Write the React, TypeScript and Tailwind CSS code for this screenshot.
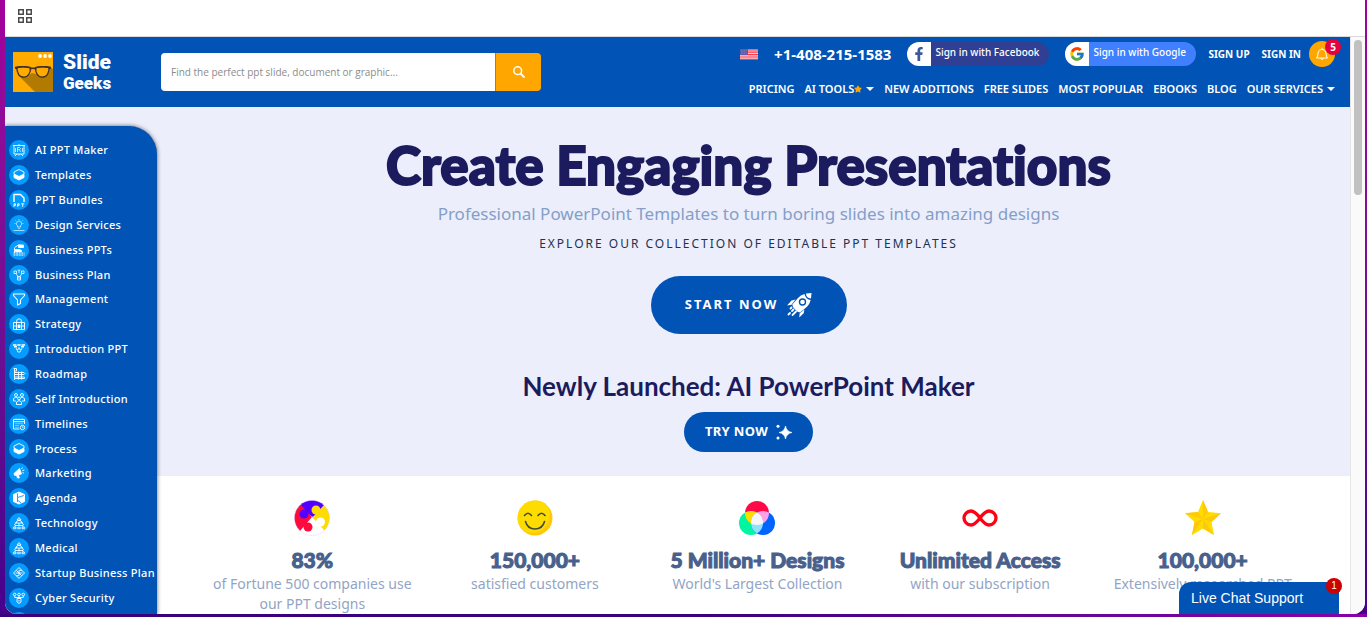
import React, { useState } from 'react';
import { FaFacebookF, FaStar } from 'react-icons/fa';
import { FcGoogle } from 'react-icons/fc';

const categories = [
  { name: 'AI PPT Maker', icon: 'board' },
  { name: 'Templates', icon: 'layers' },
  { name: 'PPT Bundles', icon: 'ppt' },
  { name: 'Design Services', icon: 'bulb' },
  { name: 'Business PPTs', icon: 'desk' },
  { name: 'Business Plan', icon: 'plan' },
  { name: 'Management', icon: 'funnel' },
  { name: 'Strategy', icon: 'case' },
  { name: 'Introduction PPT', icon: 'intro' },
  { name: 'Roadmap', icon: 'road' },
  { name: 'Self Introduction', icon: 'people' },
  { name: 'Timelines', icon: 'calendar' },
  { name: 'Process', icon: 'layers' },
  { name: 'Marketing', icon: 'horn' },
  { name: 'Agenda', icon: 'cube' },
  { name: 'Technology', icon: 'tree' },
  { name: 'Medical', icon: 'tree' },
  { name: 'Startup Business Plan', icon: 'diamond' },
  { name: 'Cyber Security', icon: 'nodes' },
];

const navLinks = [
  { label: 'PRICING' },
  { label: 'AI TOOLS', star: true, menu: true },
  { label: 'NEW ADDITIONS' },
  { label: 'FREE SLIDES' },
  { label: 'MOST POPULAR' },
  { label: 'EBOOKS' },
  { label: 'BLOG' },
  { label: 'OUR SERVICES', menu: true },
];

const iconShapes: Record<string, React.ReactNode> = {
  board: (
    <>
      <path d="M4 5.500h12M5 5.500v8.500h10V5.500M10 4v1.500M8 14l-2 2M12 14l2 2M10 14v1.500" />
      <path d="M8.500 12V7.500h2l1 1-1 1.200h-2M10.500 9.700l1 2.300M6.500 8v4M13.500 8v4" strokeWidth="0.700" />
    </>
  ),
  layers: (
    <>
      <path d="m10 4.500 5 2.500v2L10 11.500 5 9V7z" />
      <path d="M5 9.500v3L10 15l5-2.500v-3L10 12z" fill="#fff" />
    </>
  ),
  ppt: (
    <>
      <path d="M5 12V4.500h6.500L15 8v4" strokeWidth="1.400" />
      <path d="M5 16.800v-3h1.500v1.500H5M8.700 16.800v-3h1.500v1.500H8.700M12.200 13.800h3M13.700 13.800v3" strokeWidth="0.900" />
    </>
  ),
  bulb: (
    <g opacity="0.7">
      <path d="M8.500 12v-1.200a2.600 2.600 0 1 1 3 0V12zM8.800 13.300h2.400M10 4v1M5.500 8.500h1M13.500 8.500h1M6.500 5.500l.8.8M13.500 5.500l-.8.8M4.500 15.500h11" />
    </g>
  ),
  desk: (
    <>
      <path d="M5.500 8v5M5.500 7.500l4-2.500 3 .5" />
      <path d="M9.500 5h5v2.500h-5zM6.500 9.500h4l2 1v1.200h-6z" fill="#fff" />
      <path d="M4.500 13h11M4.500 15h11" strokeWidth="1.200" strokeDasharray="2 0.600" />
    </>
  ),
  plan: (
    <>
      <path d="M5 6h2.500v2.500H5zM12.500 6H15v2.500h-2.500zM8.700 5.200h2.600M10 5.200v3M7 8.500l2 3M13 8.500l-2 3" strokeWidth="0.800" />
      <path d="M8.500 11.500h3v3.500h-3zM8.500 13h3" strokeWidth="0.800" />
    </>
  ),
  funnel: <path d="M4.500 5h11v1.500L11.500 11v3.500l-3 1.500v-5l-4-4.500z" strokeWidth="1.100" />,
  case: (
    <>
      <path d="M4.500 8.500h11v7h-11zM7.800 8.500V6l1-1h2.500l1 1v2.500M7.500 8.500v7M12.500 8.500v7M4.500 12h3M12.500 12h3" />
      <path d="M9 11h2v2.500H9z" fill="#fff" />
    </>
  ),
  intro: (
    <>
      <path d="M4 6h3.500M8.300 6h3.400M12.500 6H16M5 7.800h3M12 7.800h3" strokeWidth="1.500" />
      <path d="m7 9 1 2M13 9l-1 2M10 8v2" />
      <circle cx="10" cy="11.500" r="1.700" />
    </>
  ),
  road: (
    <path d="M5.500 4.500V16M4.500 4.500h3v2.500h-2M5.500 8.500h9.500l1 1-1 1H5.500M5.500 13h9.500l1 .8-1 .7H5.500M9.500 7.500v8M12.500 7.500v8" />
  ),
  people: (
    <>
      <circle cx="7" cy="6" r="1.500" />
      <circle cx="13" cy="6" r="1.500" />
      <circle cx="10" cy="9.500" r="1.400" />
      <path d="M4.500 12V9.500L7 8l1.500 1M15.500 12V9.500L13 8l-1.500 1M7.500 15.500v-2.500L10 11.500l2.500 1.500v2.500zM4.500 12h2.500M13 12h2.500" />
    </>
  ),
  calendar: (
    <>
      <path d="M15.500 10V5.500h-11v9.500h6M4.500 7.700h11M7 4.500V6M10 4.500V6M13 4.500V6" />
      <path d="M6.500 9.700h7M6.500 11.500h4M6.500 13.300h4" strokeDasharray="1 1" />
      <circle cx="13.500" cy="13.500" r="2.200" />
      <path d="M13.500 12.300v1.200h1" strokeWidth="0.700" />
    </>
  ),
  horn: (
    <>
      <path d="M5 10.500 10.500 5.500l2 5.500-3 .8.8 3.200H8.500l-1-2.700H5.500z" fill="#fff" />
      <path d="m12.500 6 1-1.500M13.300 7.700l2-.7M13.500 9.500l1.500.7" />
    </>
  ),
  cube: (
    <>
      <path d="m10 4 5.500 2.500v7L10 16l-5.500-2.500v-7z" fill="#fff" />
      <path d="M8.500 5.500v8.500M8.500 9.500l6.500-2M8.500 12l3.500 3" stroke="#049cff" />
    </>
  ),
  tree: (
    <>
      <path d="M10 4.500 12 7H8zM8.500 7.500h3L13 10H7zM10 10v2.500M6 14v-1.500h8V14M7.500 8.500 5.500 12M12.500 8.500l2 3.500" />
      <path d="M4.500 14.200h2.500v1.500H4.500zM8.700 14.200h2.600v1.500H8.700zM13 14.200h2.500v1.500H13z" strokeWidth="0.800" />
    </>
  ),
  diamond: (
    <path d="m10 4.500 5.500 5.500-5.500 5.500L4.500 10zM7.300 7.300l2.700 2.700V7.300h3M12.700 12.700 10 10v2.700H7.300M10 10h3.500M10 10H6.500" />
  ),
  nodes: (
    <>
      <circle cx="5.700" cy="6.500" r="1.300" />
      <circle cx="10" cy="6.500" r="1.300" />
      <circle cx="14.300" cy="6.500" r="1.300" />
      <path d="M5.700 8v1.500h8.600V8M10 8v2.500M8 10.500h4v3.500l-2 1.500-2-1.500zM10 12v1.500" />
    </>
  ),
};

function CategoryIcon({ icon }: { icon: string }) {
  return (
    <svg viewBox="0 0 20 20" className="h-5 w-5 shrink-0" aria-hidden="true">
      <circle cx="10" cy="10" r="10" fill="#049cff" />
      <g fill="none" stroke="#fff" strokeWidth="0.900" strokeLinejoin="round">
        {iconShapes[icon]}
      </g>
    </svg>
  );
}

function Logo() {
  return (
    <a href="#" className="flex items-center gap-2.5 text-white">
      <svg viewBox="0 0 40 40" className="h-10 w-10" aria-hidden="true">
        <path d="M0 0h40v40H0z" fill="#ffab00" />
        <path d="M5 23 22 40h18V17l-3-2-6 9-12-3-6 4z" fill="#b27a00" />
        <g fill="#ffab00" stroke="#40302e" strokeWidth="1.300">
          <path d="M4 15.500q6-1.500 13 0 1 3-1 6.500-2 3.500-6 3-4-.5-5-4-1.500-3.500-1-5.500z" />
          <path d="M36 15.500q-6-1.500-13 0-1 3 1 6.500 2 3.500 6 3 4-.5 5-4 1.500-3.500 1-5.500z" />
        </g>
        <path d="M2 14.700q7-1.700 15 .3 3 1 6 0 8-2 15-.3v2l-2 .3-1-1.200q-5-1-11.500.3l-1 1.700q-2.500-1.500-5 0l-1-1.700Q10 14.800 5 15.800L4 17l-2-.3z" fill="#40302e" />
        <g fill="#fff">
          <circle cx="27" cy="4" r="1.900" />
          <circle cx="32" cy="4" r="1.900" />
          <circle cx="37" cy="4" r="1.900" />
        </g>
      </svg>
      <span className="flex w-12 flex-col font-['Roboto',sans-serif] font-black">
        <span className="text-[21px] leading-[22px]">Slide</span>
        <span className="text-[17px] leading-5">Geeks</span>
      </span>
    </a>
  );
}

function Flag() {
  return (
    <svg viewBox="0 0 18 11" className="h-[11px] w-[18px]" role="img" aria-label="United States">
      <path d="M0 0h18v11H0z" fill="#ffd0d4" />
      <path d="M0 .8h18M0 3.200h18M0 5.600h18M0 8h18M0 10.400h18" stroke="#ff3b4e" strokeWidth="1.200" />
      <path d="M0 0h8v6H0z" fill="#5a5aa8" />
      <path d="M1 1.500h6M1 3h6M1 4.500h6" stroke="#9c9cd0" strokeWidth="0.500" strokeDasharray="0.800 0.800" />
    </svg>
  );
}

function Caret() {
  return (
    <svg viewBox="0 0 8 4" className="h-1 w-2" aria-hidden="true">
      <path d="M0 0h8L4 4z" fill="#fff" />
    </svg>
  );
}

function Rocket() {
  return (
    <svg viewBox="0 0 26 26" className="h-[26px] w-[26px]" aria-hidden="true">
      <path d="M20 1.500 25.500 1 25 6.500q-2.500-.2-3.800-1.500T20 1.500z" fill="#fff" />
      <path d="M18.500 2q.5 2.700 2.200 4.200 1.500 1.500 4 1.800-1 4-3.700 6.700L14 20.500l-3-1-4-4.500-.7-2.500L12 6q2.500-3 6.500-4z" fill="#fff" />
      <circle cx="16.500" cy="10" r="3" fill="#fff" stroke="#0154b5" strokeWidth="1.400" />
      <path d="M9.500 7.500 5.500 8.500 1 13.500l4.500-.8zM18.500 17.500l-.8 3.700-4.500 4.300.5-4.300z" fill="#fff" />
      <path d="m7.500 17.500-1.500 1.500M4 21l-1.500 1.500M10 19.500 6.500 23M5.500 15.500l-1 1" stroke="#fff" strokeWidth="1.800" strokeLinecap="round" />
    </svg>
  );
}

function Sparkles() {
  return (
    <svg viewBox="0 0 16 16" className="h-4 w-4" aria-hidden="true">
      <path d="M9.500 2q1 5.500 6.500 6.500-5.500 1-6.500 6.500-1-5.500-6.500-6.500 5.500-1 6.500-6.500z" fill="#fff" stroke="#fff" strokeWidth="0.600" />
      <circle cx="2" cy="2.200" r="1.500" fill="#fff" />
      <circle cx="2" cy="14" r="1.500" fill="#fff" />
    </svg>
  );
}

function PuzzleIcon() {
  return (
    <svg viewBox="0 0 36 36" className="h-9 w-9" aria-hidden="true">
      <clipPath id="puzzle">
        <circle cx="18" cy="18" r="17.500" />
      </clipPath>
      <g clipPath="url(#puzzle)">
        <path d="M0 0h36v36H0z" fill="#fff" />
        <path d="M0 0h30v8L19 17 5 8z" fill="#5200ff" />
        <path d="M0 5h7l12 13-12 13H0z" fill="#ff0a3c" />
        <path d="m30 5 6 2v25h-6L18 18z" fill="#ffdc00" />
        <path d="M18 17 31 31l-6 5H10l-4-5z" fill="#fff" />
        <circle cx="10" cy="14" r="4.500" fill="#5200ff" />
        <circle cx="22" cy="10" r="4.500" fill="#ffdc00" />
        <circle cx="26.500" cy="22" r="4.500" fill="#fff" />
        <circle cx="14" cy="27" r="4.500" fill="#ff0a3c" />
      </g>
      <circle cx="18" cy="18" r="17.500" fill="none" stroke="#c9b3ff" strokeWidth="0.500" strokeDasharray="1.500 1" />
    </svg>
  );
}

function SmileIcon() {
  return (
    <svg viewBox="0 0 36 36" className="h-9 w-9" aria-hidden="true">
      <circle cx="18" cy="18" r="17.500" fill="#ffc80a" />
      <path d="M18 .5a17.500 17.500 0 0 1 13.500 6.500Q36 22 25 30 15 36 5 29.500A17.500 17.500 0 0 1 18 .5z" fill="#ffdc00" />
      <g fill="none" stroke="#414b3c" strokeWidth="1.600" strokeLinecap="round">
        <path d="M7.500 15.500q3.500-4.500 7 0M21 15.500q3.500-4.500 7 0M8.500 21.500q2 7.500 9.500 7.500t9.500-7.500" />
      </g>
    </svg>
  );
}

function ColorsIcon() {
  return (
    <svg viewBox="0 0 36 36" className="h-9 w-9" aria-hidden="true">
      <clipPath id="top">
        <circle cx="18" cy="13" r="12" />
      </clipPath>
      <clipPath id="left">
        <circle cx="12" cy="23" r="12" />
      </clipPath>
      <circle cx="18" cy="13" r="12" fill="#ff0a46" />
      <circle cx="12" cy="23" r="12" fill="#00f5a0" />
      <circle cx="24" cy="23" r="12" fill="#0064ff" />
      <g clipPath="url(#top)">
        <circle cx="12" cy="23" r="12" fill="#ffdc00" />
        <circle cx="24" cy="23" r="12" fill="#ffa0e6" />
      </g>
      <g clipPath="url(#left)">
        <circle cx="24" cy="23" r="12" fill="#8ce1ff" />
        <g clipPath="url(#top)">
          <circle cx="24" cy="23" r="12" fill="#f5f5fa" />
        </g>
      </g>
    </svg>
  );
}

function InfinityIcon() {
  return (
    <svg viewBox="0 0 36 36" className="h-9 w-9" aria-hidden="true">
      <path
        d="M18 18c-3-4-5.500-7-9-7a7 7 0 0 0 0 14c3.500 0 6-3 9-7s5.500-7 9-7a7 7 0 0 1 0 14c-3.500 0-6-3-9-7z"
        fill="none"
        stroke="#ff0014"
        strokeWidth="3.300"
      />
    </svg>
  );
}

function StarIcon() {
  return (
    <svg viewBox="0 0 36 36" className="h-9 w-9" aria-hidden="true">
      <path d="m18 0 5 12 13 1.200L26.500 22 29 35l-11-6.500L7 35l2.500-13L0 13.200 13 12z" fill="#ffdc00" />
      <path
        d="M18 0v19l5-7zM36 13.200 18 19l8.500 3zM29 35 18 19v9.500zM7 35 18 19 9.500 22zM0 13.200 18 19l-5-7z"
        fill="#ffc80a"
      />
    </svg>
  );
}

const stats = [
  { icon: <PuzzleIcon />, value: '83%', label: 'of Fortune 500 companies use our PPT designs' },
  { icon: <SmileIcon />, value: '150,000+', label: 'satisfied customers' },
  { icon: <ColorsIcon />, value: '5 Million+ Designs', label: "World's Largest Collection" },
  { icon: <InfinityIcon />, value: 'Unlimited Access', label: 'with our subscription' },
  { icon: <StarIcon />, value: '100,000+', label: 'Extensively researched PPT' },
];

function Header() {
  const [query, setQuery] = useState('');

  return (
    <header className="flex h-[70px] shrink-0 items-center bg-[#0154b5] pl-2 text-white">
      <Logo />
      <form className="ml-[50px] flex h-[38px] w-[380px]" onSubmit={(e) => e.preventDefault()}>
        <input
          type="text"
          aria-label="Search"
          value={query}
          onChange={(e) => setQuery(e.target.value)}
          placeholder="Find the perfect ppt slide, document or graphic..."
          className="min-w-0 flex-1 rounded-l bg-white px-2.5 font-['Open_Sans',sans-serif] text-[10px] text-gray-700 placeholder:text-[#8c8c8c]"
        />
        <button
          type="submit"
          aria-label="Search"
          className="flex w-[46px] items-center justify-center rounded-r border-l border-[#a08040] bg-[#ffa600]"
        >
          <svg viewBox="0 0 12 12" className="h-3 w-3" fill="none" stroke="#fff" strokeWidth="1.500">
            <circle cx="4.700" cy="4.700" r="3.900" />
            <path d="m7.500 7.500 4 4" strokeWidth="1.900" />
          </svg>
        </button>
      </form>

      <div className="ml-auto flex flex-col items-end gap-3 pr-[15px] pb-1">
        <div className="flex h-[26px] items-center">
          <Flag />
          <a href="tel:+14082151583" className="ml-4 text-[15px] font-bold">
            +1-408-215-1583
          </a>
          <button type="button" className="ml-4 flex h-6 w-[142px] overflow-hidden rounded-full bg-[#2f3f93] text-[10px] font-medium">
            <span className="flex h-6 w-6 items-center justify-center bg-white text-[#3b5998]">
              <FaFacebookF className="h-3.5 w-3.5" />
            </span>
            <span className="pl-1 leading-[21px]">Sign in with Facebook</span>
          </button>
          <button type="button" className="ml-4 flex h-6 w-[131px] overflow-hidden rounded-full bg-[#4080ff] text-[10px] font-medium">
            <span className="flex h-6 w-6 items-center justify-center bg-white">
              <FcGoogle className="h-4 w-4" />
            </span>
            <span className="pl-1 leading-[21px]">Sign in with Google</span>
          </button>
          <a href="#" className="ml-3 text-[10px] font-bold">SIGN UP</a>
          <a href="#" className="ml-3 text-[10px] font-bold">SIGN IN</a>
          <button type="button" aria-label="Notifications" className="relative ml-2 flex h-[26px] w-[26px] items-center justify-center rounded-full bg-[#ffa600]">
            <svg viewBox="0 0 14 14" className="h-3.5 w-3.5" fill="none" stroke="#fff" strokeWidth="1">
              <path d="M1.500 11q1.500-1.500 1.500-5Q3.500 2.500 7 2.200 10.500 2.500 11 6q0 3.500 1.500 5zM7 .8v1.400M5.500 11.500q1.500 2 3 0" />
            </svg>
            <span className="absolute -top-0.5 -right-1.5 h-4 w-4 rounded-full bg-[#e6003c] text-[10px] leading-4 font-bold">5</span>
          </button>
        </div>
        <nav className="flex items-center gap-2.5 text-[11px] leading-5 font-semibold">
          {navLinks.map((link) => (
            <a key={link.label} href="#" className="flex items-center whitespace-nowrap">
              {link.label}
              {link.star && <FaStar className="h-2 w-2 text-[#ffa600]" />}
              {link.menu && (
                <span className="ml-1">
                  <Caret />
                </span>
              )}
            </a>
          ))}
        </nav>
      </div>
    </header>
  );
}

function Sidebar() {
  return (
    <aside className="relative mt-[19px] flex w-[152px] shrink-0 flex-col overflow-hidden rounded-tr-[28px] bg-[#0154b5] pt-3 shadow-[0_0_4px_rgba(0,0,0,0.6)]">
      <ul className="-mb-[21px] flex min-h-0 flex-1 flex-col">
        {categories.map((category) => (
          <li key={category.name} className="flex min-h-0 flex-1 items-center">
            <a href="#" className="flex items-center gap-1.5 pl-1 text-[11px] leading-5 font-medium tracking-wide whitespace-nowrap text-white">
              <CategoryIcon icon={category.icon} />
              {category.name}
            </a>
          </li>
        ))}
        <li className="flex min-h-0 flex-1 items-center pl-1">
          <CategoryIcon icon="layers" />
        </li>
      </ul>
    </aside>
  );
}

export default function App() {
  return (
    <div className="flex h-screen flex-col overflow-hidden bg-linear-to-b from-[#a3009b] to-[#45008c] font-['Noto_Sans',sans-serif]">
      <div className="mr-0.5 ml-[5px] flex min-h-0 flex-1 flex-col overflow-hidden rounded-b-xl bg-white">
        <div className="flex h-[37px] shrink-0 items-center border-b border-[#d9d9d9] pb-1 pl-3">
          <button type="button" aria-label="Apps">
            <svg viewBox="0 0 16 16" className="h-4 w-4" fill="none" stroke="#4a4a4d" strokeWidth="1.500">
              <path d="M1.750 1.750h4.500v4.500h-4.500zM9.750 1.750h4.500v4.500h-4.500zM1.750 9.750h4.500v4.500h-4.500zM9.750 9.750h4.500v4.500h-4.500z" />
            </svg>
          </button>
        </div>

        <div className="flex min-h-0 flex-1">
          <div className="relative flex min-w-0 flex-1 flex-col">
            <Header />
            <div className="flex min-h-0 flex-1 bg-[#eceefc]">
              <Sidebar />
              <main className="flex min-w-0 flex-1 flex-col">
                <section className="flex flex-col items-center pt-7 pr-2.5 pb-6 text-center">
                  <h1 className="font-['Lato_Black','Lato',sans-serif] text-[53px] leading-[60px] font-black text-[#1b1b5e] [-webkit-text-stroke:2px_#1b1b5e] [font-variant-ligatures:none]">
                    Create Engaging Presentations
                  </h1>
                  <p className="mt-[5px] text-[17px] leading-7 text-[#849fc8]">
                    Professional PowerPoint Templates to turn boring slides into amazing designs
                  </p>
                  <p className="mt-1.5 text-xs leading-5 tracking-[2px] text-[#22314d]">
                    EXPLORE OUR COLLECTION OF EDITABLE PPT TEMPLATES
                  </p>
                  <button
                    type="button"
                    className="mt-[22px] flex h-[58px] w-[196px] items-center justify-center gap-2 rounded-full bg-[#0154b5] text-[13px] font-bold tracking-[2px] text-white"
                  >
                    START NOW
                    <Rocket />
                  </button>
                  <h2 className="mt-9 font-['Lato',sans-serif] text-[26px] leading-8 font-bold text-[#1b1b5e]">
                    Newly Launched: AI PowerPoint Maker
                  </h2>
                  <button
                    type="button"
                    className="mt-2.5 flex h-10 w-[129px] items-center justify-center gap-2 rounded-full bg-[#0154b5] text-[13px] font-bold tracking-wide text-white"
                  >
                    TRY NOW
                    <Sparkles />
                  </button>
                </section>

                <section className="grid flex-1 grid-cols-5 bg-white pt-6 pr-9 pl-11 text-center">
                  {stats.map((stat) => (
                    <div key={stat.value} className="flex flex-col items-center">
                      {stat.icon}
                      <p className="mt-2.5 font-['Lato_Black','Lato',sans-serif] text-[21px] leading-7 font-black whitespace-nowrap text-[#47608c] [-webkit-text-stroke:1px_#47608c]">
                        {stat.value}
                      </p>
                      <p className="px-2 text-sm leading-5 text-[#92a4c6]">{stat.label}</p>
                    </div>
                  ))}
                </section>
              </main>
            </div>

            <button
              type="button"
              className="absolute right-[11px] bottom-0 h-8 w-[160px] rounded-tl-xl bg-[#0154b5] pl-3 text-left font-['Liberation_Sans',sans-serif] text-sm text-white"
            >
              Live Chat Support
              <span className="absolute -top-1 -right-[3px] h-4 w-4 rounded-full bg-[#cc0000] text-center text-[10px] leading-4">1</span>
            </button>
          </div>

          <div className="w-[15px] shrink-0 border-l border-[#e5e5e5] bg-[#fafafa] px-[3px] pt-[3px]">
            <div className="h-[155px] rounded-full bg-[#c1c1c1]" />
          </div>
        </div>
      </div>
      <div className="h-[3px] shrink-0 bg-linear-to-r from-[#3a007e] via-[#3a007e] to-[#8800a8]" />
    </div>
  );
}
